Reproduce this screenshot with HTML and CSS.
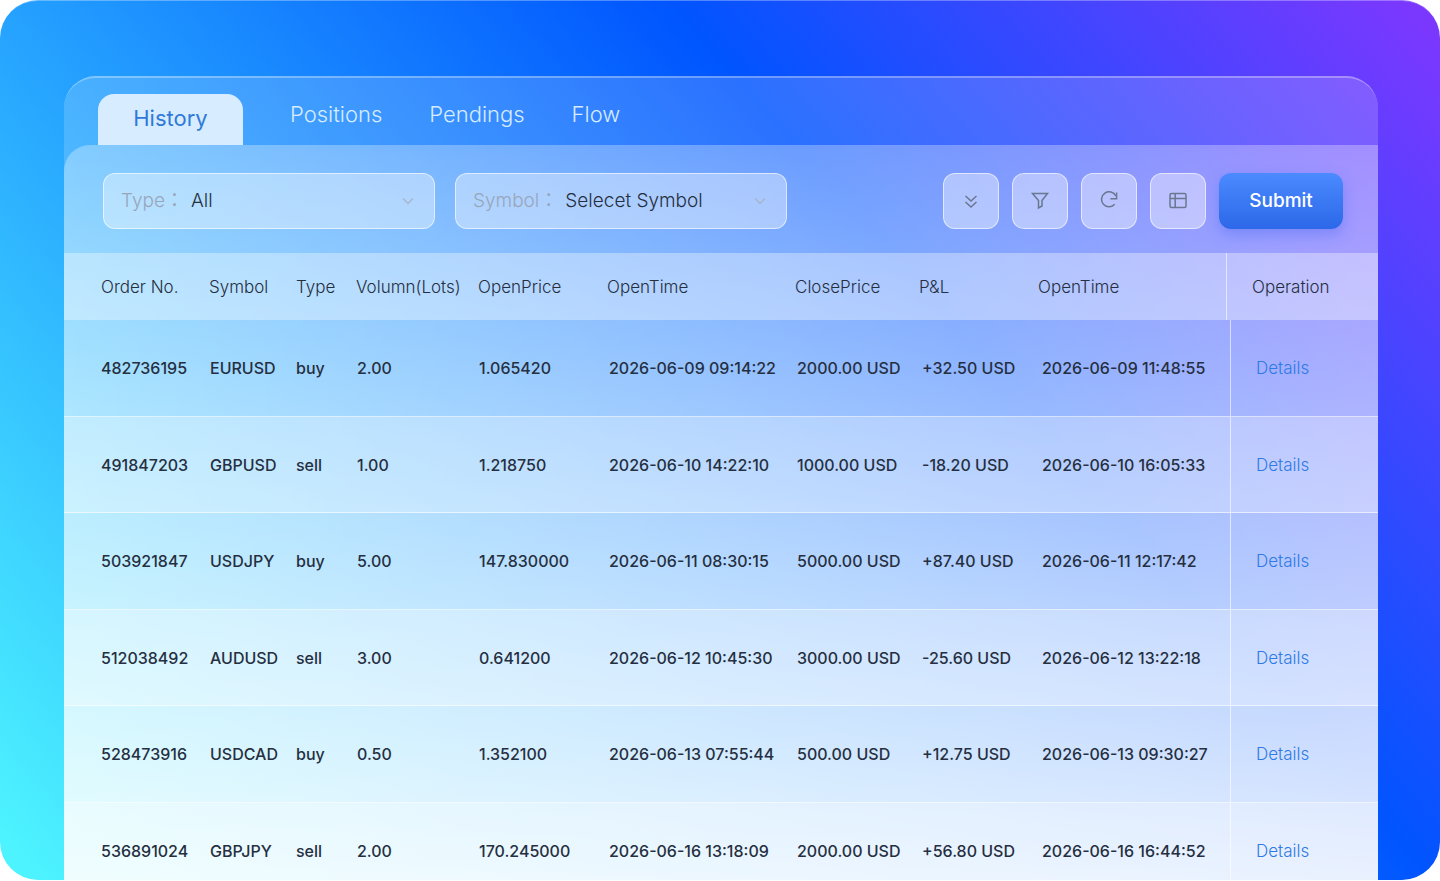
FILE: index.html
```html
<!DOCTYPE html>
<html lang="en">
<head>
  <meta charset="UTF-8" />
  <meta name="viewport" content="width=device-width, initial-scale=1.0" />
  <title>Order History</title>
  <link rel="stylesheet" href="styles.css">
</head>
<body>

  <main class="stage">
    <div class="window">

      <!-- Tabs -->
      <nav class="tabs">
        <button class="tab active" type="button">History</button>
        <button class="tab" type="button">Positions</button>
        <button class="tab" type="button">Pendings</button>
        <button class="tab" type="button">Flow</button>
      </nav>

      <section class="content">

        <!-- Filters -->
        <form class="toolbar">
          <div class="field">
            <label for="type">Type：</label>
            <select id="type">
              <option>All</option>
              <option>buy</option>
              <option>sell</option>
            </select>
            <svg class="chevron" viewBox="0 0 12 8"><path d="M1 1.5l5 5 5-5" /></svg>
          </div>
          <div class="field">
            <label for="symbol">Symbol：</label>
            <select id="symbol">
              <option>Selecet Symbol</option>
              <option>EURUSD</option>
              <option>GBPUSD</option>
              <option>USDJPY</option>
            </select>
            <svg class="chevron" viewBox="0 0 12 8"><path d="M1 1.5l5 5 5-5" /></svg>
          </div>

          <div class="actions">
            <button class="icon-btn" type="button" aria-label="Expand">
              <svg viewBox="0 0 20 20"><path d="M4.500 5l5.500 5 5.500-5M4.500 11l5.500 5 5.500-5" /></svg>
            </button>
            <button class="icon-btn" type="button" aria-label="Filter">
              <svg viewBox="0 0 20 20"><path d="M2.500 2.500h15l-5.500 7v5.500l-3.500 2V9.500z" /></svg>
            </button>
            <button class="icon-btn" type="button" aria-label="Refresh">
              <svg viewBox="0 0 20 20"><path d="M15.700 13.300a7.500 7.500 0 1 1 1.100-8.300M17.600 1.500v6.300h-6.200" /></svg>
            </button>
            <button class="icon-btn" type="button" aria-label="Columns">
              <svg viewBox="0 0 20 20"><rect x="2" y="2.500" width="16" height="14" rx="1.500" /><path d="M2 7.500h16M7.200 2.500v14" /></svg>
            </button>
            <button class="submit" type="submit">Submit</button>
          </div>
        </form>

        <!-- Orders -->
        <table class="orders">
          <thead>
            <tr><th>Order No.</th><th>Symbol</th><th>Type</th><th>Volumn(Lots)</th><th>OpenPrice</th><th>OpenTime</th><th>ClosePrice</th><th>P&amp;L</th><th>OpenTime</th><th>Operation</th></tr>
          </thead>
          <tbody>
            <tr><td>482736195</td><td>EURUSD</td><td>buy</td><td>2.00</td><td>1.065420</td><td>2026-06-09 09:14:22</td><td>2000.00 USD</td><td>+32.50 USD</td><td>2026-06-09 11:48:55</td><td><a href="#">Details</a></td></tr>
            <tr><td>491847203</td><td>GBPUSD</td><td>sell</td><td>1.00</td><td>1.218750</td><td>2026-06-10 14:22:10</td><td>1000.00 USD</td><td>-18.20 USD</td><td>2026-06-10 16:05:33</td><td><a href="#">Details</a></td></tr>
            <tr><td>503921847</td><td>USDJPY</td><td>buy</td><td>5.00</td><td>147.830000</td><td>2026-06-11 08:30:15</td><td>5000.00 USD</td><td>+87.40 USD</td><td>2026-06-11 12:17:42</td><td><a href="#">Details</a></td></tr>
            <tr><td>512038492</td><td>AUDUSD</td><td>sell</td><td>3.00</td><td>0.641200</td><td>2026-06-12 10:45:30</td><td>3000.00 USD</td><td>-25.60 USD</td><td>2026-06-12 13:22:18</td><td><a href="#">Details</a></td></tr>
            <tr><td>528473916</td><td>USDCAD</td><td>buy</td><td>0.50</td><td>1.352100</td><td>2026-06-13 07:55:44</td><td>500.00 USD</td><td>+12.75 USD</td><td>2026-06-13 09:30:27</td><td><a href="#">Details</a></td></tr>
            <tr><td>536891024</td><td>GBPJPY</td><td>sell</td><td>2.00</td><td>170.245000</td><td>2026-06-16 13:18:09</td><td>2000.00 USD</td><td>+56.80 USD</td><td>2026-06-16 16:44:52</td><td><a href="#">Details</a></td></tr>
          </tbody>
        </table>

      </section>
    </div>
  </main>

</body>
</html>
```
FILE: styles.css
```css
* {
  box-sizing: border-box;
}

body {
  margin: 0;
  background: #fff;
  color: #252f3f;
  font-family: Inter, "Noto Sans CJK JP", sans-serif;
}

button, select {
  font-family: inherit;
}

button {
  border: 0;
  padding: 0;
  background: none;
  cursor: pointer;
}

.stage {
  height: calc(100vh - 1px);
  padding: 75px 62px 0 64px;
  overflow: hidden;
  border-top: 1px solid rgba(255, 255, 255, 0.3);
  border-radius: 38px;
  background: linear-gradient(49deg, #4df3ff 2%, #0055ff 65%, #7a38ff 98%) border-box;
}

.window {
  border-top: 2px solid rgba(255, 255, 255, 0.42);
  border-radius: 32px 32px 0 0;
  background: rgba(255, 255, 255, 0.17) padding-box;
}

/* Tabs */
.tabs {
  display: flex;
  align-items: flex-end;
  gap: 47px;
  height: 67px;
  padding-left: 34px;
}

.tab {
  height: 63px;
  color: #d6ecff;
  font-size: 22px;
  font-weight: 350;
}

.tab.active {
  width: 145px;
  height: 51px;
  padding-bottom: 3px;
  border-radius: 16px 16px 0 0;
  background: #d8ecff;
  color: #2f7ad9;
  font-weight: 400;
}

/* Filters */
.content {
  border-radius: 26px 0 0 0;
  background: linear-gradient(rgba(255, 255, 255, 0.3), rgba(255, 255, 255, 0.88));
}

.toolbar {
  display: flex;
  align-items: center;
  gap: 20px;
  height: 108px;
  padding: 3px 35px 0 39px;
}

.field {
  position: relative;
  display: flex;
  flex: 0 1 332px;
  align-items: center;
  gap: 7px;
  height: 56px;
  padding-left: 17px;
  border: 1px solid rgba(255, 255, 255, 0.6);
  border-radius: 12px;
  background: rgba(255, 255, 255, 0.38);
  font-size: 19px;
}

.field label {
  height: 24px;
  color: #98a6ba;
  font-weight: 350;
  line-height: 24px;
  white-space: nowrap;
}

.field select {
  flex: 1;
  min-width: 0;
  height: 100%;
  border: 0;
  outline: 0;
  appearance: none;
  background: none;
  color: #252f3f;
  font-size: 19px;
  font-weight: 350;
}

.chevron {
  position: absolute;
  top: 23px;
  right: 20px;
  width: 12px;
  height: 8px;
  fill: none;
  stroke: #a7b6cc;
  stroke-width: 1.5;
  pointer-events: none;
}

.actions {
  display: flex;
  gap: 13px;
  margin-left: auto;
}

.icon-btn {
  display: flex;
  align-items: center;
  justify-content: center;
  width: 56px;
  height: 56px;
  border: 1px solid rgba(255, 255, 255, 0.6);
  border-radius: 12px;
  background: rgba(255, 255, 255, 0.4);
}

.icon-btn svg {
  width: 20px;
  height: 20px;
  fill: none;
  stroke: #69778f;
  stroke-width: 1.5;
}

.submit {
  width: 124px;
  height: 56px;
  border-radius: 12px;
  background: linear-gradient(#4b8aff, #2c68e8);
  box-shadow: 0 6px 14px rgba(60, 100, 240, 0.35);
  color: #fff;
  font-size: 19px;
  font-weight: 450;
}

/* Orders */
.orders {
  display: block;
}

.orders thead,
.orders tbody {
  display: block;
}

.orders tr {
  display: grid;
  align-items: center;
  padding-left: 37px;
  white-space: nowrap;
}

.orders th,
.orders td {
  min-width: 0;
  padding: 0;
  text-align: left;
}

.orders thead tr {
  grid-template-columns: 108fr 87fr 60fr 122fr 129fr 188fr 124fr 119fr 188fr 152px;
  height: 67px;
  background: rgba(255, 255, 255, 0.35);
}

.orders tbody tr {
  grid-template-columns: 109fr 86fr 61fr 122fr 130fr 188fr 125fr 120fr 188fr 148px;
  height: 97px;
  border-bottom: 1px solid rgba(255, 255, 255, 0.6);
}

.orders tbody tr:nth-child(even) {
  height: 96px;
  background: rgba(255, 255, 255, 0.25);
}

.orders th {
  font-size: 17px;
  font-weight: 350;
}

.orders td {
  font-size: 16px;
  font-weight: 500;
}

.orders th:last-child,
.orders td:last-child {
  display: flex;
  align-items: center;
  align-self: stretch;
  padding-left: 25px;
  border-left: 1px solid rgba(255, 255, 255, 0.6);
}

.orders a {
  color: #2f7ae5;
  font-size: 17px;
  font-weight: 350;
  text-decoration: none;
}
```
